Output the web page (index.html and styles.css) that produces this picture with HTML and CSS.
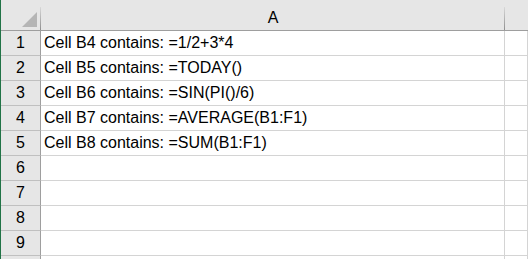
FILE: index.html
```html
<!DOCTYPE html>
<html>
<head>
  <meta charset="UTF-8">
  <title>Sheet</title>
  <link rel="stylesheet" href="styles.css">
</head>
<body>
  <div class="sheet">
    <div class="col-head corner">
      <svg class="corner-mark" width="15" height="15" viewBox="0 0 15 15">
        <polygon points="15,0 15,15 0,15" fill="#b5b5b5"/>
      </svg>
    </div>
    <div class="col-head">A</div>
    <div class="col-head last"></div>

    <div class="row-head">1</div>
    <div class="cell">Cell B4 contains: =1/2+3*4</div>
    <div class="cell"></div>

    <div class="row-head">2</div>
    <div class="cell">Cell B5 contains: =TODAY()</div>
    <div class="cell"></div>

    <div class="row-head">3</div>
    <div class="cell">Cell B6 contains: =SIN(PI()/6)</div>
    <div class="cell"></div>

    <div class="row-head">4</div>
    <div class="cell">Cell B7 contains: =AVERAGE(B1:F1)</div>
    <div class="cell"></div>

    <div class="row-head">5</div>
    <div class="cell">Cell B8 contains: =SUM(B1:F1)</div>
    <div class="cell"></div>

    <div class="row-head">6</div>
    <div class="cell"></div>
    <div class="cell"></div>

    <div class="row-head">7</div>
    <div class="cell"></div>
    <div class="cell"></div>

    <div class="row-head">8</div>
    <div class="cell"></div>
    <div class="cell"></div>

    <div class="row-head">9</div>
    <div class="cell"></div>
    <div class="cell"></div>

    <div class="row-head"></div>
    <div class="cell"></div>
    <div class="cell"></div>
  </div>
</body>
</html>
```

FILE: styles.css
```css
:root {
  --head-bg: #e6e6e6;
  --grid-color: #d4d4d4;
  --head-line: #9e9e9e;
  --row-line: #c0c0c0;
  --excel-green: #217346;
}

* {
  margin: 0;
  padding: 0;
  box-sizing: border-box;
}

body {
  font-family: 'Liberation Sans', Arial, sans-serif;
  background-color: white;
  color: #000;
  width: 528px;
  height: 259px;
  overflow: hidden;
}

.sheet {
  display: grid;
  grid-template-columns: 40px 464px 1fr;
  grid-auto-rows: 25px;
  grid-template-rows: 31px;
  height: 259px;
  overflow: hidden;
  border-left: 1px solid var(--excel-green);
}

.col-head {
  position: relative;
  background-color: var(--head-bg);
  border-bottom: 1px solid var(--head-line);
  font-size: 16px;
  text-align: center;
  padding-top: 6px;
  line-height: 24px;
}

/* short separators that fade in towards the bottom */
.col-head::after {
  content: "";
  position: absolute;
  right: 0;
  top: 7px;
  bottom: 0;
  width: 1px;
  background: linear-gradient(#d8d8d8, #8f8f8f);
}

.col-head.last::after {
  display: none;
}

.corner-mark {
  position: absolute;
  left: 21px;
  top: 12px;
}

.row-head {
  background-color: var(--head-bg);
  border-right: 1px solid var(--head-line);
  border-bottom: 1px solid var(--row-line);
  font-size: 16px;
  text-align: center;
  line-height: 24px;
}

.cell {
  border-right: 1px solid var(--grid-color);
  border-bottom: 1px solid var(--grid-color);
  font-size: 16px;
  line-height: 23px;
  padding-left: 3px;
  white-space: nowrap;
}
```
